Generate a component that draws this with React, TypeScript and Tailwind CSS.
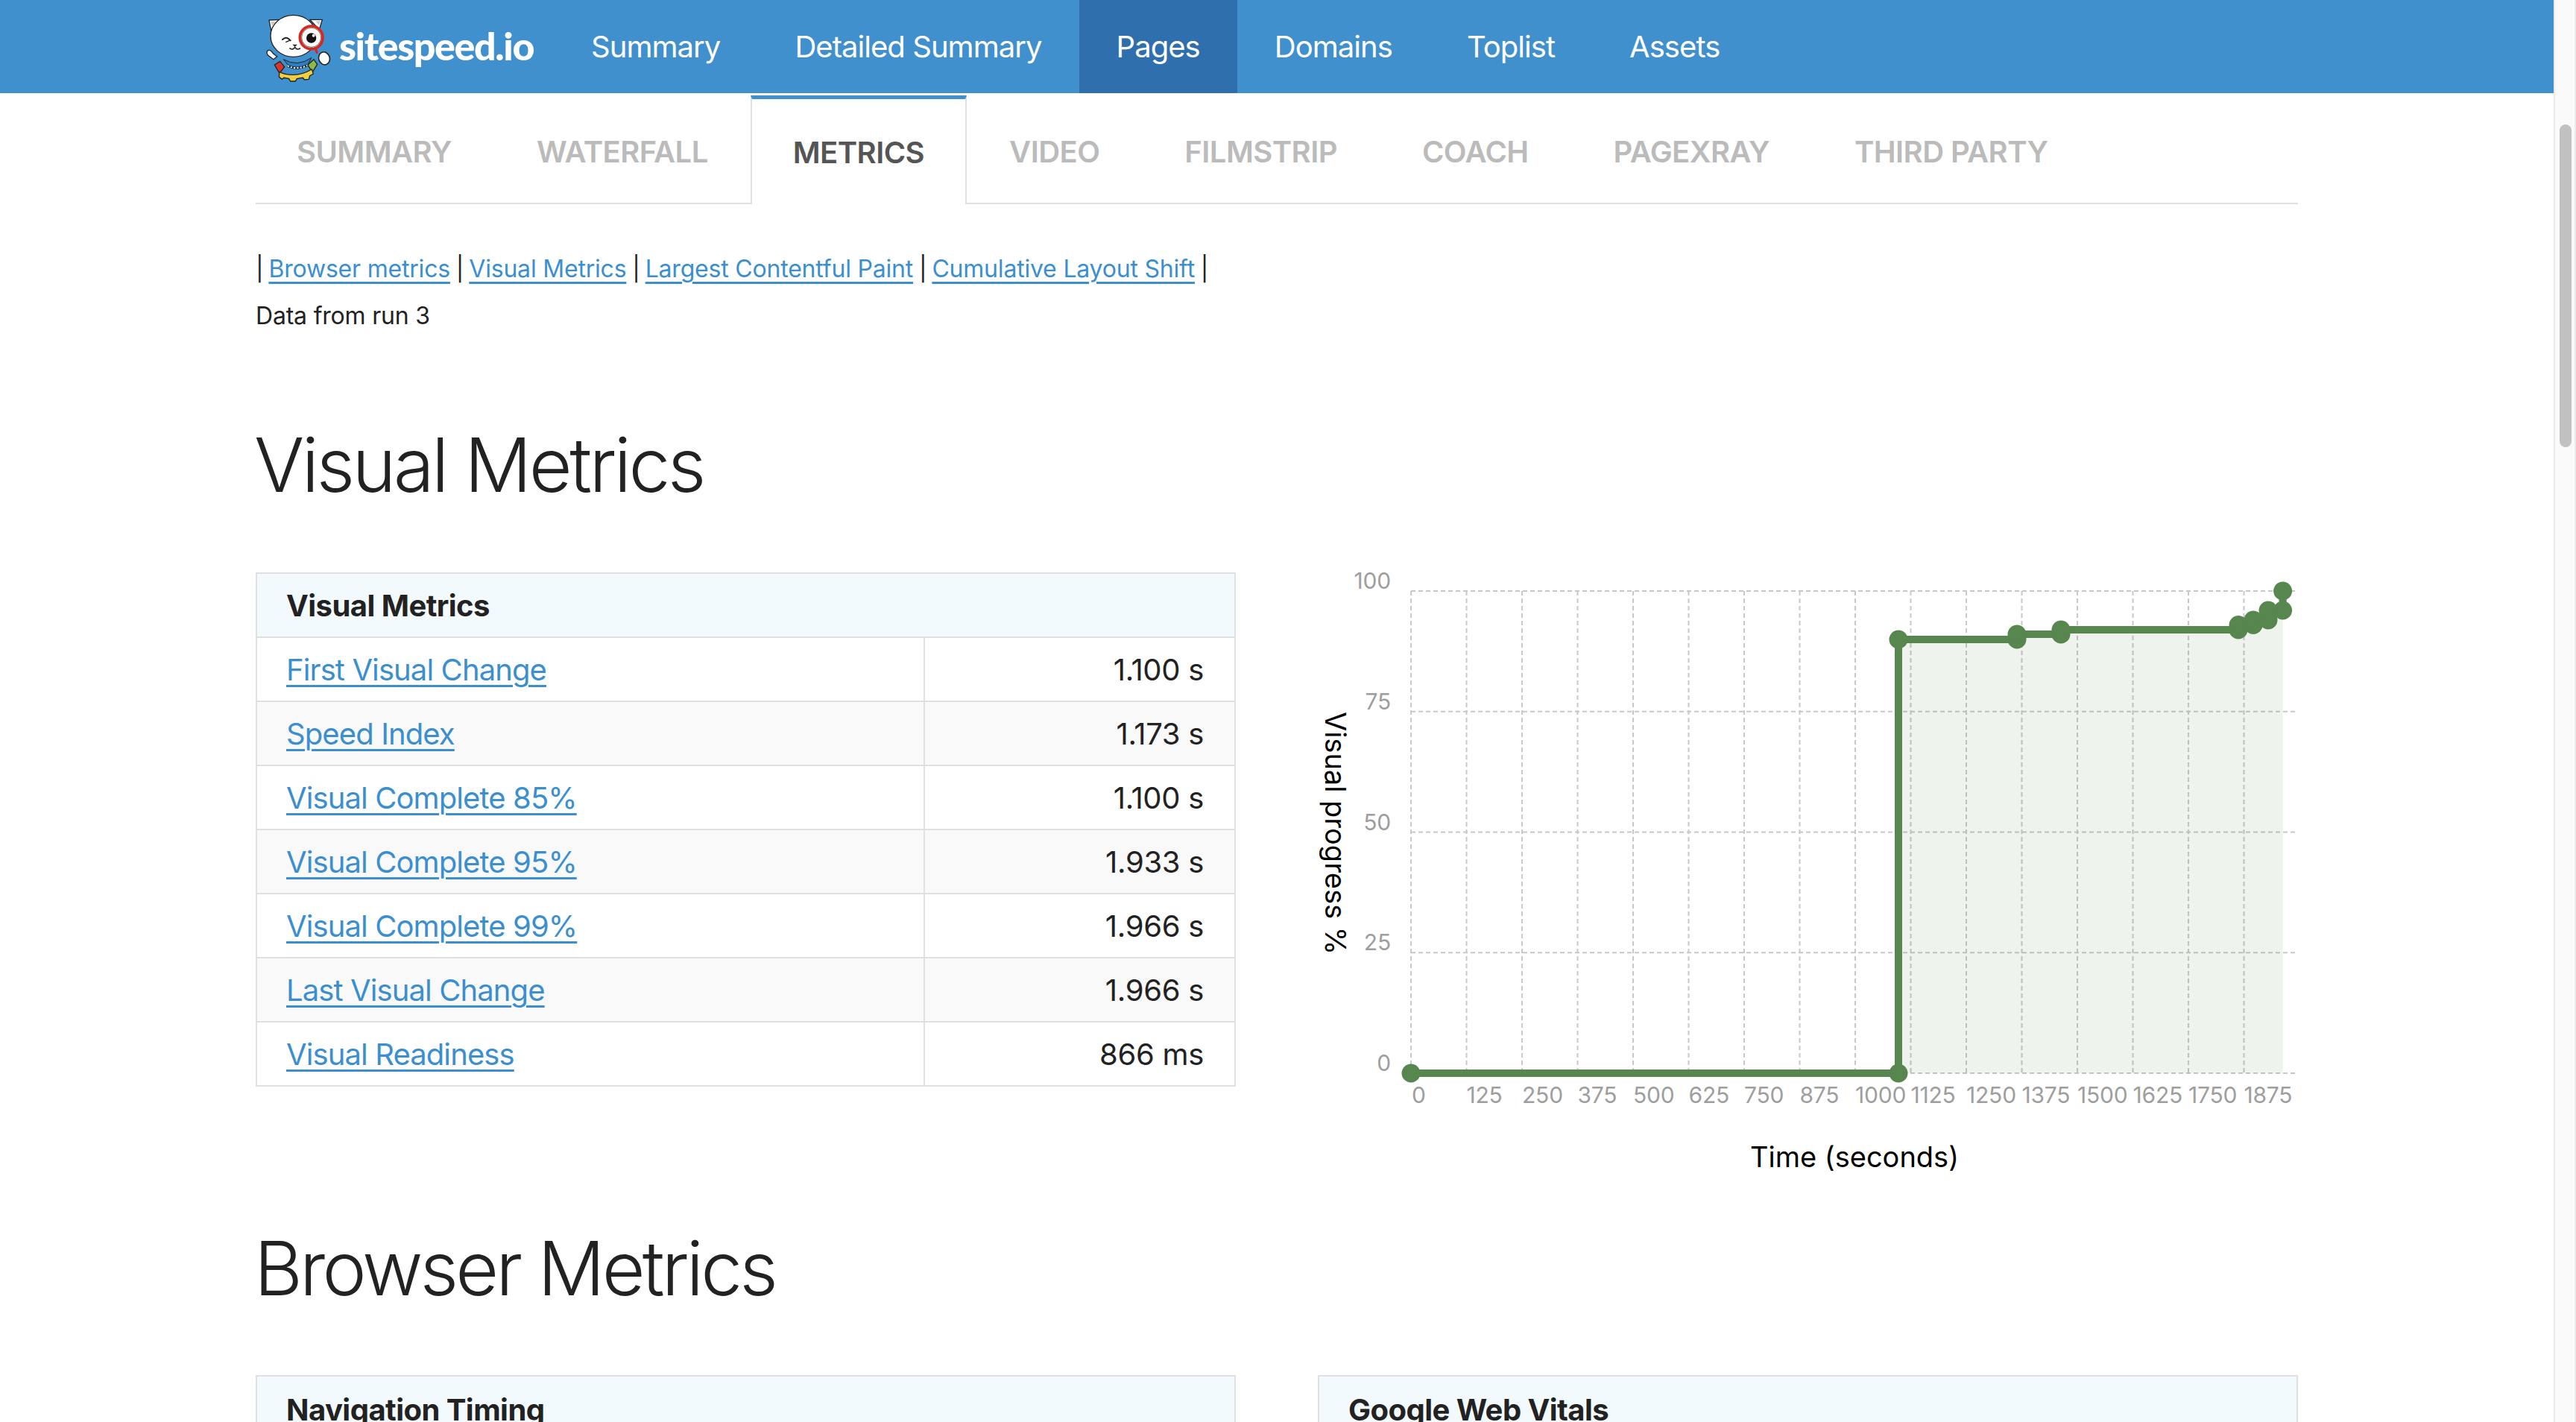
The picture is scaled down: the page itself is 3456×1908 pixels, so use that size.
const navItems = ['Summary', 'Detailed Summary', 'Pages', 'Domains', 'Toplist', 'Assets']
const tabs = ['Summary', 'Waterfall', 'Metrics', 'Video', 'Filmstrip', 'Coach', 'PageXray', 'Third party']

const visualMetrics = [
  ['First Visual Change', '1.100 s'],
  ['Speed Index', '1.173 s'],
  ['Visual Complete 85%', '1.100 s'],
  ['Visual Complete 95%', '1.933 s'],
  ['Visual Complete 99%', '1.966 s'],
  ['Last Visual Change', '1.966 s'],
  ['Visual Readiness', '866 ms'],
]

function Logo() {
  return (
    <svg viewBox="0 0 300 300" className="w-[100px] h-[100px] shrink-0">
      {/* gear */}
      <path d="M52 222l22-14 18 22-20 26z" fill="#d9352a" stroke="#222" strokeWidth="4" />
      <path d="M186 222l24-22 14 20-20 32z" fill="#8dbb45" stroke="#222" strokeWidth="4" />
      <path d="M72 250q20 12 56 12t74-22l6 18-14 8-4 14-18 2-6-8-24 4-6 10-20 0-6-10-20-4-8 6-12-10z" fill="#f0cf3e" stroke="#222" strokeWidth="4" />
      {/* collar */}
      <path d="M88 200q56 32 112-6l-16 32q-38 16-72 4z" fill="#2b7fc0" stroke="#222" strokeWidth="3" />
      <path d="M104 226q38 18 80-2" fill="none" stroke="#222" strokeWidth="9" />
      <path d="M104 226q38 18 80-2" fill="none" stroke="#fff" strokeWidth="5" strokeDasharray="7 6" />
      {/* paws */}
      <path d="M26 164q-10 6 0 20l22 16 14-12-16-12q-10-16-20-12z" fill="#fff" stroke="#222" strokeWidth="4" />
      {/* ears + head */}
      <path d="M30 42l44-2-36 44z" fill="#fff" stroke="#222" strokeWidth="4" strokeLinejoin="round" />
      <path d="M244 40l-50 0 38 40z" fill="#fff" stroke="#222" strokeWidth="4" strokeLinejoin="round" />
      <path d="M37 48l20 0-15 18z" fill="#c9c9c9" />
      <path d="M237 46l-20 0 14 16z" fill="#c9c9c9" />
      <ellipse cx="128" cy="106" rx="92" ry="84" fill="#fff" stroke="#222" strokeWidth="4" />
      {/* face */}
      <path d="M84 120q16-16 32 4" fill="none" stroke="#222" strokeWidth="6" strokeLinecap="round" />
      <path d="M98 130l14-6" fill="none" stroke="#222" strokeWidth="4" strokeLinecap="round" />
      <path d="M124 140h20l-10 9z" fill="#222" />
      <path d="M114 156q12 8 20-5q8 13 20 5" fill="none" stroke="#222" strokeWidth="5" strokeLinecap="round" />
      {/* magnifier */}
      <path d="M218 160l6 16" stroke="#d9261c" strokeWidth="9" />
      <circle cx="200" cy="112" r="46" fill="#fff" stroke="#d9261c" strokeWidth="11" />
      <circle cx="200" cy="112" r="39" fill="none" stroke="#222" strokeWidth="2" />
      <circle cx="200" cy="114" r="20" fill="#111" />
      <circle cx="209" cy="104" r="6" fill="#fff" />
      <ellipse cx="252" cy="196" rx="22" ry="26" fill="#fff" stroke="#222" strokeWidth="5" transform="rotate(-20 252 196)" />
    </svg>
  )
}

function Navbar() {
  return (
    <nav className="h-[125px] bg-[#4090cd] text-white">
      <div className="w-[2740px] mx-auto h-full flex items-stretch">
        <a className="flex items-center w-[400px] shrink-0 pl-[8px]">
          <Logo />
          <span className="ml-[4px] font-['Lato',sans-serif] font-black text-[52px] tracking-[-1.4px] leading-none pb-[4px]">sitespeed.io</span>
        </a>
        {navItems.map((item) => (
          <a key={item} className={`flex items-center px-[50px] text-[40px] tracking-[-0.95px] ${item === 'Pages' ? 'bg-[#2f6fad]' : ''}`}>
            {item}
          </a>
        ))}
      </div>
    </nav>
  )
}

function Tabs() {
  return (
    <ul className="mt-[3px] h-[146px] flex border-b-2 border-[#e0e0e0]">
      {tabs.map((tab) => (
        <li
          key={tab}
          className={
            tab === 'Metrics'
              ? 'h-[146px] flex items-center px-[55px] border-x-2 border-t-[5px] border-x-[#e0e0e0] border-t-[#4090cd] bg-white text-[#555] uppercase font-semibold text-[40px] tracking-[-0.55px]'
              : 'h-[144px] flex items-center px-[57px] first:pl-[55px] pt-[8px] text-[#bbb] uppercase font-semibold text-[40px] tracking-[-0.55px]'
          }
        >
          <span className={tab === 'Metrics' ? 'pt-[2px]' : ''}>{tab}</span>
        </li>
      ))}
    </ul>
  )
}

function MetricLink({ children }: { children: string }) {
  return <a className="text-[#3b8fcf] underline decoration-[3px] underline-offset-[6px]">{children}</a>
}

function Sep() {
  return <span className="tracking-[-1.1px]"> | </span>
}

function MetricsTable() {
  return (
    <table className="w-full border-collapse border-2 border-[#e0e0e0] text-[40px] text-[#222] table-fixed">
      <colgroup>
        <col className="w-[896px]" />
        <col />
      </colgroup>
      <thead>
        <tr className="bg-[#f3fafe] h-[86px]">
          <th colSpan={2} className="text-left font-bold pl-[39px] pt-[2px] tracking-[-0.55px] border-b-2 border-[#e0e0e0]">Visual Metrics</th>
        </tr>
      </thead>
      <tbody>
        {visualMetrics.map(([name, value], i) => (
          <tr key={name} className={`h-[86px] ${i % 2 === 1 ? 'bg-[#f9f9f9]' : 'bg-white'}`}>
            <td className="pl-[39px] pt-[2px] tracking-[-0.9px] border-b-2 border-r-2 border-[#e0e0e0]"><MetricLink>{name}</MetricLink></td>
            <td className="text-right pr-[41px] pt-[2px] tracking-[-0.3px] border-b-2 border-[#e0e0e0]">{value}</td>
          </tr>
        ))}
      </tbody>
    </table>
  )
}

// Coordinates are page pixels, shifted by the chart's origin (x 1768, y 740)
const ox = 1768
const oy = 740
const gx = (n: number) => 1893 + 74.5 * n - ox
const gy = (v: number) => 1439 - (v / 25) * 161.75 - oy

const steps: number[][] = [
  [1893, 1439], [2547, 1439], [2547, 857], [2706, 857], [2706, 850], [2765, 850], [2765, 844],
  [3003, 844], [3003, 837.5], [3023, 837.5], [3023, 831], [3043, 831], [3043, 818], [3062.6, 818], [3062.6, 792],
].map(([x, y]) => [x - ox, y - oy])

function VisualProgressChart() {
  const line = steps.map(([x, y]) => `${x},${y}`).join(' ')
  const area = steps.slice(1).map(([x, y]) => `${x},${y}`).join(' ') + ` ${3062.6 - ox},${1439 - oy}`
  const xLabels = [0, 125, 250, 375, 500, 625, 750, 875, 1000, 1125, 1250, 1375, 1500, 1625, 1750, 1875]

  return (
    <svg width="1315" height="850" viewBox="0 0 1315 850" className="block font-['Inter',sans-serif]">
      {[0, 25, 50, 75, 100].map((v) => (
        <line key={v} x1={gx(0)} x2={gx(16)} y1={gy(v)} y2={gy(v)} stroke="#c8c8c8" strokeWidth="2" strokeDasharray="6 4" />
      ))}
      {Array.from({ length: 17 }, (_, n) => (
        <line key={n} x1={gx(n)} x2={gx(n)} y1={gy(100)} y2={gy(0)} stroke="#c8c8c8" strokeWidth="2" strokeDasharray="6 4" />
      ))}
      <polygon points={area} fill="#58864f" fillOpacity="0.1" />
      <polyline points={line} fill="none" stroke="#58864f" strokeWidth="10" />
      {steps.map(([x, y], i) => (
        <circle key={i} cx={x} cy={y} r="12.5" fill="#58864f" />
      ))}
      {[0, 25, 50, 75, 100].map((v) => (
        <text key={v} x="98" y={gy(v) - 3} textAnchor="end" fontSize="30" letterSpacing="-0.2" fill="#9e9e9e">{v}</text>
      ))}
      {xLabels.map((v, n) => (
        <text key={v} x={v === 0 ? gx(0) + 1 : gx(n)} y="739" fontSize="30" letterSpacing="-0.2" fill="#9e9e9e">{v}</text>
      ))}
      <text x="720" y="825" textAnchor="middle" fontSize="38" fill="#000">Time (seconds)</text>
      <text transform="translate(10 377) rotate(90)" textAnchor="middle" fontSize="38" fill="#000">Visual progress %</text>
    </svg>
  )
}

export default function App() {
  return (
    <div className="h-[1908px] overflow-hidden flex bg-white font-['Inter',sans-serif] text-[#222]">
      <main className="w-[3426px] shrink-0">
        <Navbar />
        <div className="w-[2740px] mx-auto">
          <Tabs />
          <p className="mt-[55px] text-[32px] leading-[63px] tracking-[-0.2px]">
            <Sep /><MetricLink>Browser metrics</MetricLink><Sep /><MetricLink>Visual Metrics</MetricLink><Sep /><MetricLink>Largest Contentful Paint</MetricLink><Sep /><MetricLink>Cumulative Layout Shift</MetricLink><Sep />
            <br />
            Data from run 3
          </p>
          <h2 className="mt-[109px] -ml-[2px] text-[100px] leading-[120px] font-light tracking-[-3.6px]">Visual Metrics</h2>
          <div className="mt-[84px] flex gap-[110px] items-start">
            <div className="w-[1315px] shrink-0"><MetricsTable /></div>
            <div className="-mt-[27px]"><VisualProgressChart /></div>
          </div>
          <h2 className="mt-[51px] -ml-[2px] text-[100px] leading-[120px] font-light tracking-[-3.9px]">Browser Metrics</h2>
          <div className="mt-[83px] flex gap-[110px]">
            {['Navigation Timing', 'Google Web Vitals'].map((title) => (
              <div key={title} className="w-[1315px] h-[90px] border-2 border-[#e0e0e0] bg-[#f3fafe] pl-[39px] pt-[20px] text-[40px] font-bold tracking-[-0.55px] leading-[50px]">
                {title}
              </div>
            ))}
          </div>
        </div>
      </main>
      {/* scrollbar */}
      <aside className="w-[30px] shrink-0 h-full bg-[#fafafa] border-x-2 border-[#ebebeb] pl-[6px]">
        <div className="mt-[167px] w-[16px] h-[433px] rounded-full bg-[#c1c1c1]" />
      </aside>
    </div>
  )
}
